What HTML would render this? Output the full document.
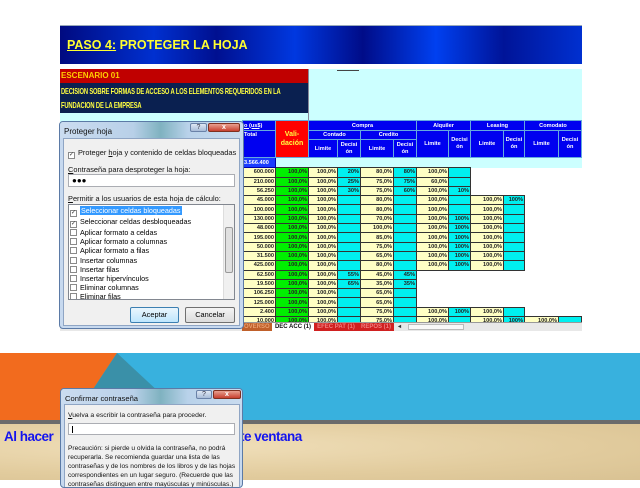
<!DOCTYPE html>
<html><head><meta charset="utf-8"><style>
*{margin:0;padding:0;box-sizing:border-box}
body{width:640px;height:480px;overflow:hidden;background:#fff;font-family:"Liberation Sans",Arial,sans-serif;position:relative}
.a{position:absolute}
#banner{left:60px;top:25px;width:522px;height:39px;background:linear-gradient(90deg,#000a80 0%,#0030d0 18%,#001090 30%,#0038e0 45%,#000c88 58%,#0040f0 72%,#001498 85%,#0030d0 100%);border-top:1px solid #9ab;}
#banner span{position:absolute;left:7px;top:12px;color:#ffff30;font-weight:bold;font-size:12.5px}
#sheet{left:60px;top:69px;width:522px;height:262px;background:#ccffff;overflow:hidden}
#tbl{position:absolute;left:182px;top:51px;border-collapse:collapse;table-layout:fixed;font-size:5.6px;font-weight:bold}
#tbl td{border:1px solid #333;text-align:right;padding:0 1px;overflow:hidden;white-space:nowrap;color:#222;height:9.3px;line-height:8px}
#tbl tr.h td{background:#0000f0;color:#fff;text-align:center;border-color:#6ad}
.y{background:#ffffc4}.g{background:#00ee00}.c{background:#00f0f0}.w{background:#fff;border:none!important}
.dlg{background:#c7d9ef;border:1px solid #5b7aa6;border-radius:4px;overflow:hidden}
.tb{position:absolute;left:0;top:0;right:0;height:16px;background:linear-gradient(90deg,#cbdcf0 0%,#b8d0e8 40%,#7fb2c0 55%,#b9d2ea 70%,#c9dbef 100%)}
.in{position:absolute;background:#f0f0f0;border:1px solid #8fa5c4}
.f{font-size:7.4px;color:#111;position:absolute;white-space:nowrap}
.cb{display:inline-block;width:7px;height:7px;border:1px solid #8a8a8a;background:#fff;margin-right:3px;vertical-align:-1px;font-size:6px;line-height:5px;text-align:center;color:#333}
.btn{position:absolute;border:1px solid #707070;border-radius:2px;background:linear-gradient(#f4f4f4,#dcdcdc);font-size:7.4px;text-align:center;line-height:14px}
</style></head><body>
<div id="banner" class="a"><span><u>PASO 4:</u> PROTEGER LA HOJA</span></div>
<div id="sheet" class="a">
 <div class="a" style="left:0;top:0;width:248px;height:14px;background:#c00000;color:#ffcc00;font-weight:bold;font-size:8px;padding:2px 1px">ESCENARIO 01</div>
 <div class="a" style="left:0;top:14px;width:248px;height:30px;background:#0a2050"></div>
 <div class="a" style="left:1px;top:15px;color:#ffff40;font-weight:bold;font-size:8.5px;line-height:14px;white-space:nowrap;transform:scaleX(0.68);transform-origin:0 0;letter-spacing:-0.2px">DECISION SOBRE FORMAS DE ACCESO A LOS ELEMENTOS REQUERIDOS EN LA<br>FUNDACION DE LA EMPRESA</div>
 <div class="a" style="left:248px;top:0;width:1px;height:51px;background:#889"></div>
 <div class="a" style="left:277px;top:1px;width:22px;height:1px;background:#444"></div>
 <table id="tbl">
  <colgroup><col style="width:33px"><col style="width:33px"><col style="width:29px"><col style="width:23px"><col style="width:33px"><col style="width:23px"><col style="width:32px"><col style="width:22px"><col style="width:33px"><col style="width:21px"><col style="width:34px"><col style="width:23px"></colgroup>
  <tr class="h"><td style="height:10px;text-align:left"><u>o (us$)</u></td><td rowspan="3" style="background:#ff0000;color:#ffff40;font-size:7px;line-height:9px">Vali-<br>dación</td><td colspan="4">Compra</td><td colspan="2">Alquiler</td><td colspan="2">Leasing</td><td colspan="2">Comodato</td></tr>
  <tr class="h"><td rowspan="2" style="text-align:left;vertical-align:top">Total</td><td colspan="2" style="height:9px">Contado</td><td colspan="2">Credito</td><td rowspan="2">Limite</td><td rowspan="2" style="line-height:7px">Decisi<br>ón</td><td rowspan="2">Limite</td><td rowspan="2" style="line-height:7px">Decisi<br>ón</td><td rowspan="2">Limite</td><td rowspan="2" style="line-height:7px">Decisi<br>ón</td></tr>
  <tr class="h"><td style="height:18px">Limite</td><td style="line-height:7px">Decisi<br>ón</td><td>Limite</td><td style="line-height:7px">Decisi<br>ón</td></tr>
  <tr><td style="background:#1a3cff;color:#fff;text-align:left;height:10px;border-color:#00a">3.566.400</td><td class="w" colspan="11" style="background:#ccffff"></td></tr>
  <tr><td class="y">600.000</td><td class="g">100,0%</td><td class="y">100,0%</td><td class="c">20%</td><td class="y">80,0%</td><td class="c">80%</td><td class="y">100,0%</td><td class="c"></td><td class="w"></td><td class="w"></td><td class="w"></td><td class="w"></td></tr>
  <tr><td class="y">210.000</td><td class="g">100,0%</td><td class="y">100,0%</td><td class="c">25%</td><td class="y">75,0%</td><td class="c">75%</td><td class="y">60,0%</td><td class="c"></td><td class="w"></td><td class="w"></td><td class="w"></td><td class="w"></td></tr>
  <tr><td class="y">56.250</td><td class="g">100,0%</td><td class="y">100,0%</td><td class="c">30%</td><td class="y">75,0%</td><td class="c">60%</td><td class="y">100,0%</td><td class="c">10%</td><td class="w"></td><td class="w"></td><td class="w"></td><td class="w"></td></tr>
  <tr><td class="y">45.000</td><td class="g">100,0%</td><td class="y">100,0%</td><td class="c"></td><td class="y">80,0%</td><td class="c"></td><td class="y">100,0%</td><td class="c"></td><td class="y">100,0%</td><td class="c">100%</td><td class="w"></td><td class="w"></td></tr>
  <tr><td class="y">100.000</td><td class="g">100,0%</td><td class="y">100,0%</td><td class="c"></td><td class="y">80,0%</td><td class="c"></td><td class="y">100,0%</td><td class="c"></td><td class="y">100,0%</td><td class="c"></td><td class="w"></td><td class="w"></td></tr>
  <tr><td class="y">130.000</td><td class="g">100,0%</td><td class="y">100,0%</td><td class="c"></td><td class="y">70,0%</td><td class="c"></td><td class="y">100,0%</td><td class="c">100%</td><td class="y">100,0%</td><td class="c"></td><td class="w"></td><td class="w"></td></tr>
  <tr><td class="y">48.000</td><td class="g">100,0%</td><td class="y">100,0%</td><td class="c"></td><td class="y">100,0%</td><td class="c"></td><td class="y">100,0%</td><td class="c">100%</td><td class="y">100,0%</td><td class="c"></td><td class="w"></td><td class="w"></td></tr>
  <tr><td class="y">195.000</td><td class="g">100,0%</td><td class="y">100,0%</td><td class="c"></td><td class="y">85,0%</td><td class="c"></td><td class="y">100,0%</td><td class="c">100%</td><td class="y">100,0%</td><td class="c"></td><td class="w"></td><td class="w"></td></tr>
  <tr><td class="y">50.000</td><td class="g">100,0%</td><td class="y">100,0%</td><td class="c"></td><td class="y">75,0%</td><td class="c"></td><td class="y">100,0%</td><td class="c">100%</td><td class="y">100,0%</td><td class="c"></td><td class="w"></td><td class="w"></td></tr>
  <tr><td class="y">31.500</td><td class="g">100,0%</td><td class="y">100,0%</td><td class="c"></td><td class="y">65,0%</td><td class="c"></td><td class="y">100,0%</td><td class="c">100%</td><td class="y">100,0%</td><td class="c"></td><td class="w"></td><td class="w"></td></tr>
  <tr><td class="y">425.000</td><td class="g">100,0%</td><td class="y">100,0%</td><td class="c"></td><td class="y">80,0%</td><td class="c"></td><td class="y">100,0%</td><td class="c">100%</td><td class="y">100,0%</td><td class="c"></td><td class="w"></td><td class="w"></td></tr>
  <tr><td class="y">62.500</td><td class="g">100,0%</td><td class="y">100,0%</td><td class="c">55%</td><td class="y">45,0%</td><td class="c">45%</td><td class="w"></td><td class="w"></td><td class="w"></td><td class="w"></td><td class="w"></td><td class="w"></td></tr>
  <tr><td class="y">19.500</td><td class="g">100,0%</td><td class="y">100,0%</td><td class="c">65%</td><td class="y">35,0%</td><td class="c">35%</td><td class="w"></td><td class="w"></td><td class="w"></td><td class="w"></td><td class="w"></td><td class="w"></td></tr>
  <tr><td class="y">106.250</td><td class="g">100,0%</td><td class="y">100,0%</td><td class="c"></td><td class="y">65,0%</td><td class="c"></td><td class="w"></td><td class="w"></td><td class="w"></td><td class="w"></td><td class="w"></td><td class="w"></td></tr>
  <tr><td class="y">125.000</td><td class="g">100,0%</td><td class="y">100,0%</td><td class="c"></td><td class="y">65,0%</td><td class="c"></td><td class="w"></td><td class="w"></td><td class="w"></td><td class="w"></td><td class="w"></td><td class="w"></td></tr>
  <tr><td class="y">2.400</td><td class="g">100,0%</td><td class="y">100,0%</td><td class="c"></td><td class="y">75,0%</td><td class="c"></td><td class="y">100,0%</td><td class="c">100%</td><td class="y">100,0%</td><td class="c"></td><td class="w"></td><td class="w"></td></tr>
  <tr><td class="y">10.000</td><td class="g">100,0%</td><td class="y">100,0%</td><td class="c"></td><td class="y">75,0%</td><td class="c"></td><td class="y">100,0%</td><td class="c"></td><td class="y">100,0%</td><td class="c">100%</td><td class="y">100,0%</td><td class="c"></td></tr>
 </table>
 <div class="a" style="left:0;top:253px;width:522px;height:9px;background:#e8e8e8;border-top:1px solid #999;font-size:6px;font-weight:bold;line-height:8px">
  <span class="a" style="left:182px;width:30px;height:8px;background:#c0602a;color:#e8a070;padding-left:2px">OVERSO</span>
  <span class="a" style="left:212px;width:42px;height:8px;background:#fff;color:#111;text-align:center">DEC ACC (1)</span>
  <span class="a" style="left:254px;width:44px;height:8px;background:#d02020;color:#f08080;text-align:center">EFEC PAT (1)</span>
  <span class="a" style="left:298px;width:36px;height:8px;background:#d02020;color:#f08080;text-align:center">REPOS (1)</span>
  <span class="a" style="left:338px;color:#333">◂</span>
  <span class="a" style="left:348px;top:1px;width:56px;height:6px;background:#f8f8f8;border:1px solid #bbb"></span>
 </div>
</div>

<!-- Protect dialog -->
<div class="a dlg" style="left:59px;top:121px;width:185px;height:208px">
 <div class="tb"></div>
 <div class="f" style="left:4px;top:5px;font-size:8px">Proteger hoja</div>
 <div class="a" style="left:130px;top:1px;width:17px;height:9px;background:linear-gradient(#dfe8f4,#a8bcd8);border:1px solid #6a82a8;border-radius:2px;font-size:7px;text-align:center;line-height:8px;color:#334">?</div>
 <div class="a" style="left:148px;top:1px;width:32px;height:9px;background:linear-gradient(#e8a090,#c84030);border:1px solid #803020;border-radius:2px;font-size:7px;text-align:center;line-height:8px;color:#fff;font-weight:bold">x</div>
 <div class="in" style="left:3px;top:16px;width:177px;height:188px">
  <div class="f" style="left:4px;top:9px"><span class="cb">✓</span>Proteger <u>h</u>oja y contenido de celdas bloqueadas</div>
  <div class="f" style="left:4px;top:26px"><u>C</u>ontraseña para desproteger la hoja:</div>
  <div class="a" style="left:4px;top:35px;width:167px;height:13px;background:#fff;border:1px solid #abadb3;font-size:8px;line-height:11px;padding-left:3px">●●●</div>
  <div class="f" style="left:4px;top:55px"><u>P</u>ermitir a los usuarios de esta hoja de cálculo:</div>
  <div class="a" style="left:4px;top:65px;width:167px;height:96px;background:#fff;border:1px solid #828790;font-size:7.2px;line-height:9.2px;padding-top:1px;overflow:hidden">
   <div style="margin-left:1px"><span class="cb">✓</span><span style="background:#3399ff;color:#fff;padding:0 1px">Seleccionar celdas bloqueadas</span></div>
   <div style="margin-left:1px"><span class="cb">✓</span>Seleccionar celdas desbloqueadas</div>
   <div style="margin-left:1px"><span class="cb"></span>Aplicar formato a celdas</div>
   <div style="margin-left:1px"><span class="cb"></span>Aplicar formato a columnas</div>
   <div style="margin-left:1px"><span class="cb"></span>Aplicar formato a filas</div>
   <div style="margin-left:1px"><span class="cb"></span>Insertar columnas</div>
   <div style="margin-left:1px"><span class="cb"></span>Insertar filas</div>
   <div style="margin-left:1px"><span class="cb"></span>Insertar hipervínculos</div>
   <div style="margin-left:1px"><span class="cb"></span>Eliminar columnas</div>
   <div style="margin-left:1px"><span class="cb"></span>Eliminar filas</div>
   <div class="a" style="right:0;top:0;width:11px;height:94px;background:#f0f0f0;border-left:1px solid #ddd"><div class="a" style="left:1px;top:22px;width:8px;height:46px;background:#e0e0e0;border:1px solid #999;border-radius:2px"></div></div>
  </div>
  <div class="btn" style="left:66px;top:168px;width:49px;height:16px;border-color:#3c7fb1;background:linear-gradient(#eaf6fd,#bee6fd)">Aceptar</div>
  <div class="btn" style="left:121px;top:168px;width:50px;height:16px">Cancelar</div>
 </div>
</div>

<!-- bottom band -->
<svg class="a" style="left:0;top:353px" width="640" height="72">
 <rect x="0" y="0" width="640" height="68" fill="#38b1de"/>
 <polygon points="0,0 117,0 72,68 0,68" fill="#f26b1e"/>
 <polygon points="117,0 72,68 190,68" fill="#3a90a8"/>
 <rect x="0" y="67" width="640" height="4" fill="#6b6b6b"/>
</svg>
<div class="a" style="left:0;top:424px;width:640px;height:56px;background:radial-gradient(ellipse at 30% 40%,#f0dfba,#e2cc9e 60%,#d9c293)"></div>
<div class="a" style="left:4px;top:429px;font-size:13.5px;font-weight:bold;color:#1414ee;white-space:nowrap;letter-spacing:-0.5px">Al hacer</div>
<div class="a" style="left:240px;top:429px;font-size:13.5px;font-weight:bold;color:#1414ee;white-space:nowrap;letter-spacing:-0.5px">te ventana</div>

<!-- Confirm dialog -->
<div class="a dlg" style="left:60px;top:388px;width:183px;height:100px">
 <div class="tb" style="height:15px"></div>
 <div class="f" style="left:4px;top:5px;font-size:7.6px">Confirmar contraseña</div>
 <div class="a" style="left:135px;top:1px;width:16px;height:9px;background:linear-gradient(#dfe8f4,#a8bcd8);border:1px solid #6a82a8;border-radius:2px;font-size:7px;text-align:center;line-height:8px;color:#334">?</div>
 <div class="a" style="left:152px;top:1px;width:28px;height:9px;background:linear-gradient(#e8a090,#c84030);border:1px solid #803020;border-radius:2px;font-size:7px;text-align:center;line-height:8px;color:#fff;font-weight:bold">x</div>
 <div class="in" style="left:3px;top:15px;width:176px;height:90px">
  <div class="f" style="left:3px;top:7px;font-size:6.8px"><u>V</u>uelva a escribir la contraseña para proceder.</div>
  <div class="a" style="left:3px;top:18px;width:167px;height:12px;background:#fff;border:1px solid #abadb3"><div class="a" style="left:3px;top:2px;width:1px;height:7px;background:#000"></div></div>
  <div class="f" style="left:3px;top:39px;font-size:6.6px;line-height:9px">Precaución: si pierde u olvida la contraseña, no podrá<br>recuperarla. Se recomienda guardar una lista de las<br>contraseñas y de los nombres de los libros y de las hojas<br>correspondientes en un lugar seguro. (Recuerde que las<br>contraseñas distinguen entre mayúsculas y minúsculas.)</div>
 </div>
</div>
</body></html>
